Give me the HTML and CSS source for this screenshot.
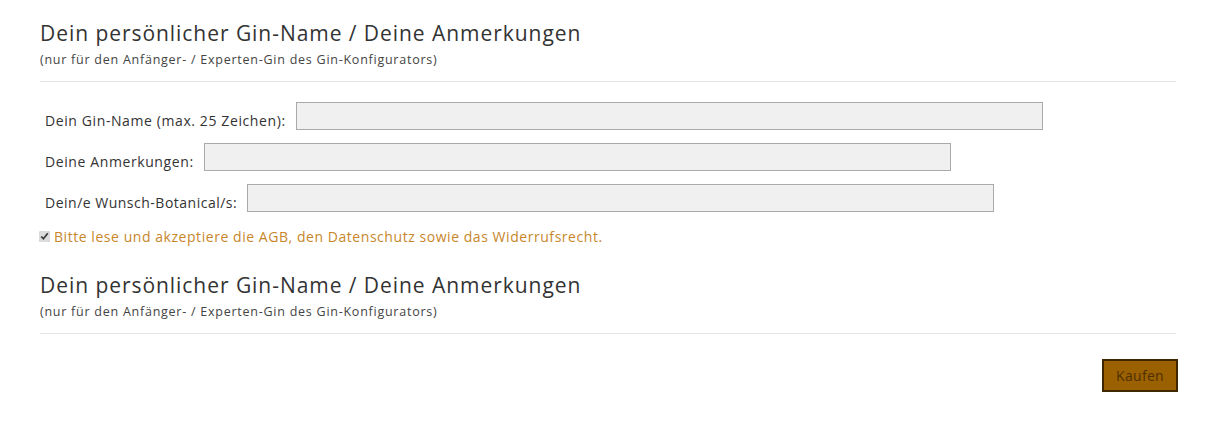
FILE: index.html
```html
<!DOCTYPE html>
<html lang="de">
<head>
<meta charset="utf-8">
<link rel="stylesheet" href="styles.css">
</head>
<body>
<div class="page">
  <div class="section-head">
    <h2 class="title">Dein persönlicher Gin-Name / Deine Anmerkungen</h2>
    <p class="subtitle">(nur für den Anfänger- / Experten-Gin des Gin-Konfigurators)</p>
  </div>
  <form class="form">
    <div class="row"><label class="label">Dein Gin-Name (max. 25 Zeichen):</label><input class="field" type="text"></div>
    <div class="row"><label class="label">Deine Anmerkungen:</label><input class="field" type="text"></div>
    <div class="row"><label class="label">Dein/e Wunsch-Botanical/s:</label><input class="field" type="text"></div>
    <div class="agree"><input class="check" type="checkbox" checked><span class="agree-text">Bitte lese und akzeptiere die AGB, den Datenschutz sowie das Widerrufsrecht.</span></div>
  </form>
  <div class="section-head second">
    <h2 class="title">Dein persönlicher Gin-Name / Deine Anmerkungen</h2>
    <p class="subtitle">(nur für den Anfänger- / Experten-Gin des Gin-Konfigurators)</p>
  </div>
  <div class="actions"><button class="buy" type="button">Kaufen</button></div>
</div>
</body>
</html>
```
FILE: styles.css
```css
* { box-sizing: border-box; }
body {
  margin: 0;
  background: #fff;
  font-family: "Open Sans", "Liberation Sans", sans-serif;
  color: #333;
}
.page {
  width: 1136px;
  margin-left: 40px;
  padding-top: 19px;
}
.section-head {
  border-bottom: 1px solid #e5e5e5;
  padding-bottom: 13px;
}
.title {
  margin: 0;
  font-weight: 400;
  font-size: 21px;
  line-height: 28px;
  color: #333;
  letter-spacing: 0.95px;
}
.subtitle {
  margin: 5px 0 0;
  font-size: 12.5px;
  line-height: 16px;
  color: #444;
  letter-spacing: 0.75px;
}
.form {
  padding: 20px 0 0 5px;
}
.row {
  display: flex;
  align-items: center;
  gap: 10px;
  height: 28px;
  margin-bottom: 13px;
}
.label {
  font-size: 14px;
  color: #333;
  padding-top: 8px;
  letter-spacing: 0.6px;
}
.row:nth-child(3) .label {
  letter-spacing: 0.5px;
}
.field {
  width: 747px;
  height: 28px;
  background: #f0f0f0;
  border: 1px solid #aaa;
  border-radius: 0;
  margin: 0;
}
.agree {
  display: flex;
  align-items: center;
  gap: 4px;
  margin-left: -6px;
  padding-top: 2px;
}
.check {
  width: 11px;
  height: 11px;
  margin: 0;
  accent-color: #dcdcdc;
}
.agree-text {
  font-size: 14px;
  color: #c8862a;
  letter-spacing: 0.55px;
}
.second {
  margin-top: 25px;
}
.actions {
  display: flex;
  justify-content: flex-end;
  margin-right: -2px;
  padding-top: 25px;
}
.buy {
  width: 76px;
  height: 33px;
  background: #9b6100;
  border: 2px solid #3f2700;
  color: #4f3000;
  font-family: inherit;
  font-size: 14px;
  padding: 0;
  letter-spacing: 0.3px;
}
```
